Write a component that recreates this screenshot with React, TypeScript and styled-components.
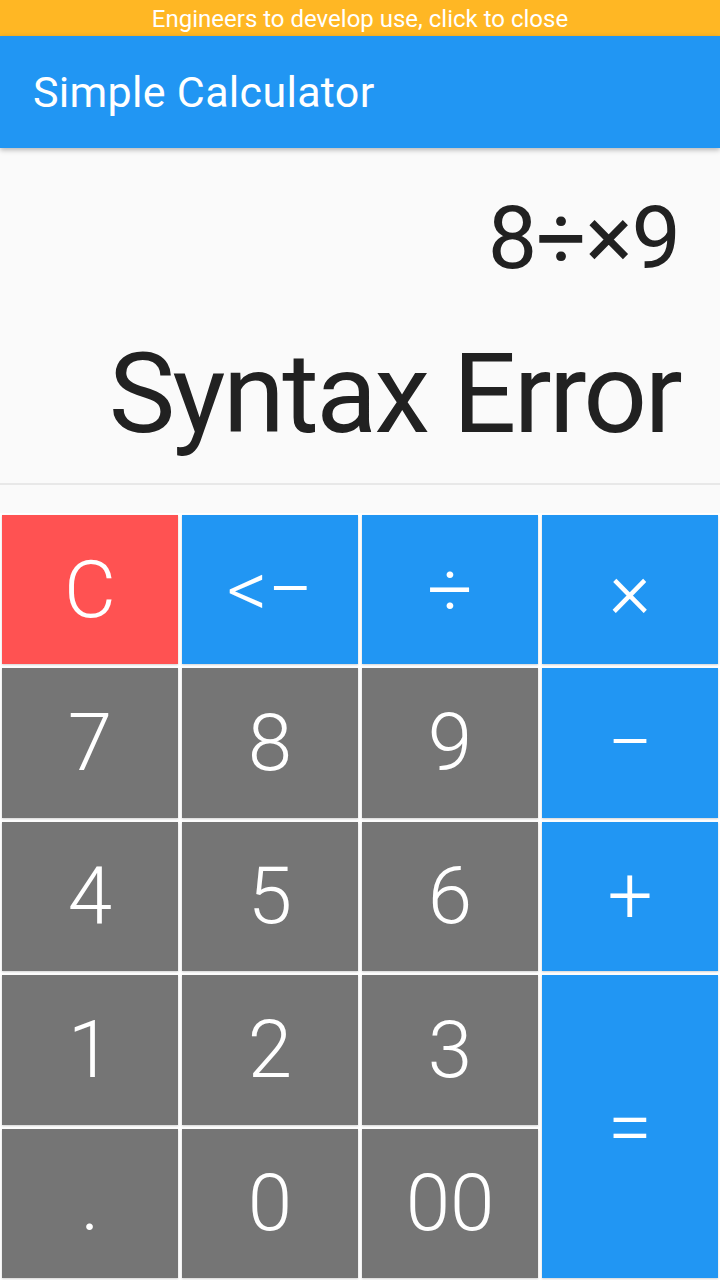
import styled, { createGlobalStyle } from 'styled-components';

const GlobalStyle = createGlobalStyle`
  html, body {
    margin: 0;
    padding: 0;
    background: #fafafa;
  }
  body {
    font-family: Roboto, 'Noto Sans', sans-serif;
  }
`;

const Screen = styled.div`
  width: 720px;
  height: 1280px;
  display: flex;
  flex-direction: column;
  overflow: hidden;
  background-color: #fafafa;
`;

const Banner = styled.div`
  flex: 0 0 36px;
  box-sizing: border-box;
  padding-top: 2px;
  background-color: #ffb724;
  color: #fff;
  font-size: 24px;
  line-height: 34px;
  text-align: center;
`;

const AppBar = styled.header`
  flex: 0 0 112px;
  display: flex;
  align-items: center;
  padding: 0 33px;
  box-sizing: border-box;
  background-color: #2196f3;
  color: #fff;
  font-size: 43px;
  letter-spacing: 0.3px;
  box-shadow: 0 2px 5px rgba(0, 0, 0, 0.28);
  position: relative;
  z-index: 1;
`;

const Display = styled.section`
  flex: 0 0 auto;
  display: flex;
  flex-direction: column;
  align-items: flex-end;
  padding: 40px 40px 0 40px;
  color: #212121;
`;

const Expression = styled.div`
  font-size: 88px;
  line-height: 100px;
  letter-spacing: -1px;
`;

const Result = styled.div`
  margin-top: 41px;
  margin-bottom: 24px;
  font-size: 112px;
  line-height: 130px;
  letter-spacing: -2.6px;
`;

const Divider = styled.hr`
  margin: 0 0 28px;
  border: 0;
  border-top: 2px solid #e8e8e8;
`;

const Keypad = styled.div`
  flex: 1 1 auto;
  display: grid;
  grid-template-columns: repeat(4, 1fr);
  grid-template-rows: repeat(5, 1fr);
  gap: 4px;
  padding: 2px;
  background-color: #fff;
`;

type Tone = 'clear' | 'op' | 'num';

const toneColor: Record<Tone, string> = {
  clear: '#ff5252',
  op: '#2196f3',
  num: '#757575',
};

const Key = styled.button<{ $tone: Tone; $tall?: boolean }>`
  border: 0;
  margin: 0;
  padding: 0;
  display: flex;
  align-items: center;
  justify-content: center;
  background-color: ${(p) => toneColor[p.$tone]};
  color: #fff;
  font-family: Roboto, 'Noto Sans', sans-serif;
  font-size: 80px;
  font-weight: 300;
  box-shadow: 0 1px 2px rgba(0, 0, 0, 0.18);
  grid-row: ${(p) => (p.$tall ? 'span 2' : 'auto')};
  grid-column: ${(p) => (p.$tall ? '4' : 'auto')};
`;

const keys: { label: string; tone: Tone; tall?: boolean }[] = [
  { label: 'C', tone: 'clear' },
  { label: '<−', tone: 'op' },
  { label: '÷', tone: 'op' },
  { label: '×', tone: 'op' },
  { label: '7', tone: 'num' },
  { label: '8', tone: 'num' },
  { label: '9', tone: 'num' },
  { label: '−', tone: 'op' },
  { label: '4', tone: 'num' },
  { label: '5', tone: 'num' },
  { label: '6', tone: 'num' },
  { label: '+', tone: 'op' },
  { label: '1', tone: 'num' },
  { label: '2', tone: 'num' },
  { label: '3', tone: 'num' },
  { label: '=', tone: 'op', tall: true },
  { label: '.', tone: 'num' },
  { label: '0', tone: 'num' },
  { label: '00', tone: 'num' },
];

export default function App() {
  return (
    <Screen>
      <GlobalStyle />
      <Banner>Engineers to develop use, click to close</Banner>
      <AppBar>Simple Calculator</AppBar>
      <Display>
        <Expression>8÷×9</Expression>
        <Result>Syntax Error</Result>
      </Display>
      <Divider />
      <Keypad>
        {keys.map((k) => (
          <Key key={k.label} $tone={k.tone} $tall={k.tall}>
            {k.label}
          </Key>
        ))}
      </Keypad>
    </Screen>
  );
}
